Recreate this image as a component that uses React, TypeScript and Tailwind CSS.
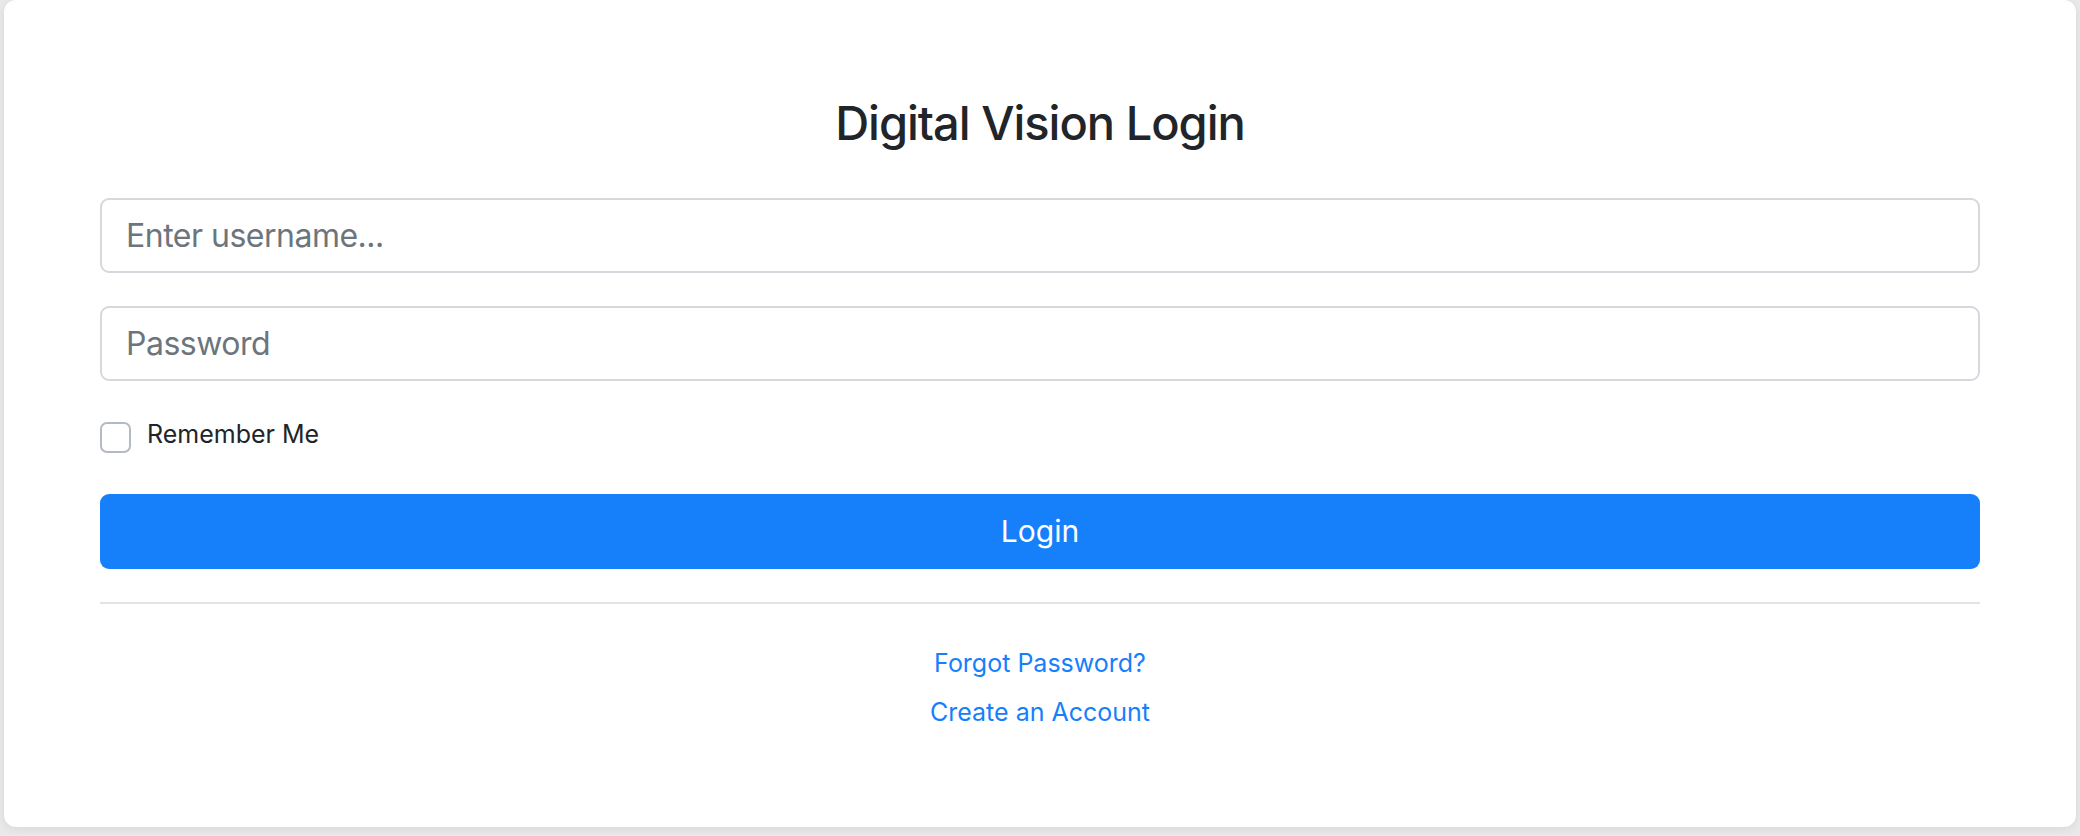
import { useState } from "react";

const App = () => {
  const [remember, setRemember] = useState(false);

  return (
    <div className="min-h-[836px] bg-[#e9e9e9] px-[4px] pb-[9px] font-['Inter','Helvetica_Neue',Arial,sans-serif]">
      {/* Login card */}
      <div className="h-[827px] rounded-[12px] bg-white px-[96px] pt-[94px] shadow-[0_2px_8px_rgba(0,0,0,0.08)]">
        <h2 className="text-center text-[47px] leading-[58px] font-medium tracking-[-1px] text-[#212529]">
          Digital Vision Login
        </h2>

        <form className="mt-[46px] flex flex-col" onSubmit={(e) => e.preventDefault()}>
          <input
            type="text"
            placeholder="Enter username..."
            className="h-[75px] w-full rounded-[9px] border-2 border-[#d5d9dd] px-[24px] text-[32px] tracking-[-0.5px] text-[#212529] placeholder:text-[#6c757d] outline-none"
          />
          <input
            type="password"
            placeholder="Password"
            className="mt-[33px] h-[75px] w-full rounded-[9px] border-2 border-[#d5d9dd] px-[24px] text-[32px] tracking-[-0.5px] text-[#212529] placeholder:text-[#6c757d] outline-none"
          />

          <label className="mt-[38px] flex items-start gap-[16px] cursor-pointer">
            <input
              type="checkbox"
              checked={remember}
              onChange={() => setRemember(!remember)}
              className="mt-[3px] h-[31px] w-[31px] appearance-none rounded-[7px] border-2 border-[#b3bac1] bg-white"
            />
            <span className="text-[25px] leading-[30px] text-[#212529]">Remember Me</span>
          </label>

          <button
            type="submit"
            className="mt-[41px] h-[75px] w-full rounded-[9px] bg-[#1680fb] text-[30px] text-white"
          >
            Login
          </button>
        </form>

        <div className="mt-[33px] h-[2px] bg-[#e4e4e4]" />

        <div className="mt-[44px] flex flex-col items-center gap-[19px] text-[25px] leading-[30px] text-[#1680fb]">
          <a href="#">Forgot Password?</a>
          <a href="#">Create an Account</a>
        </div>
      </div>
    </div>
  );
};

export default App;
